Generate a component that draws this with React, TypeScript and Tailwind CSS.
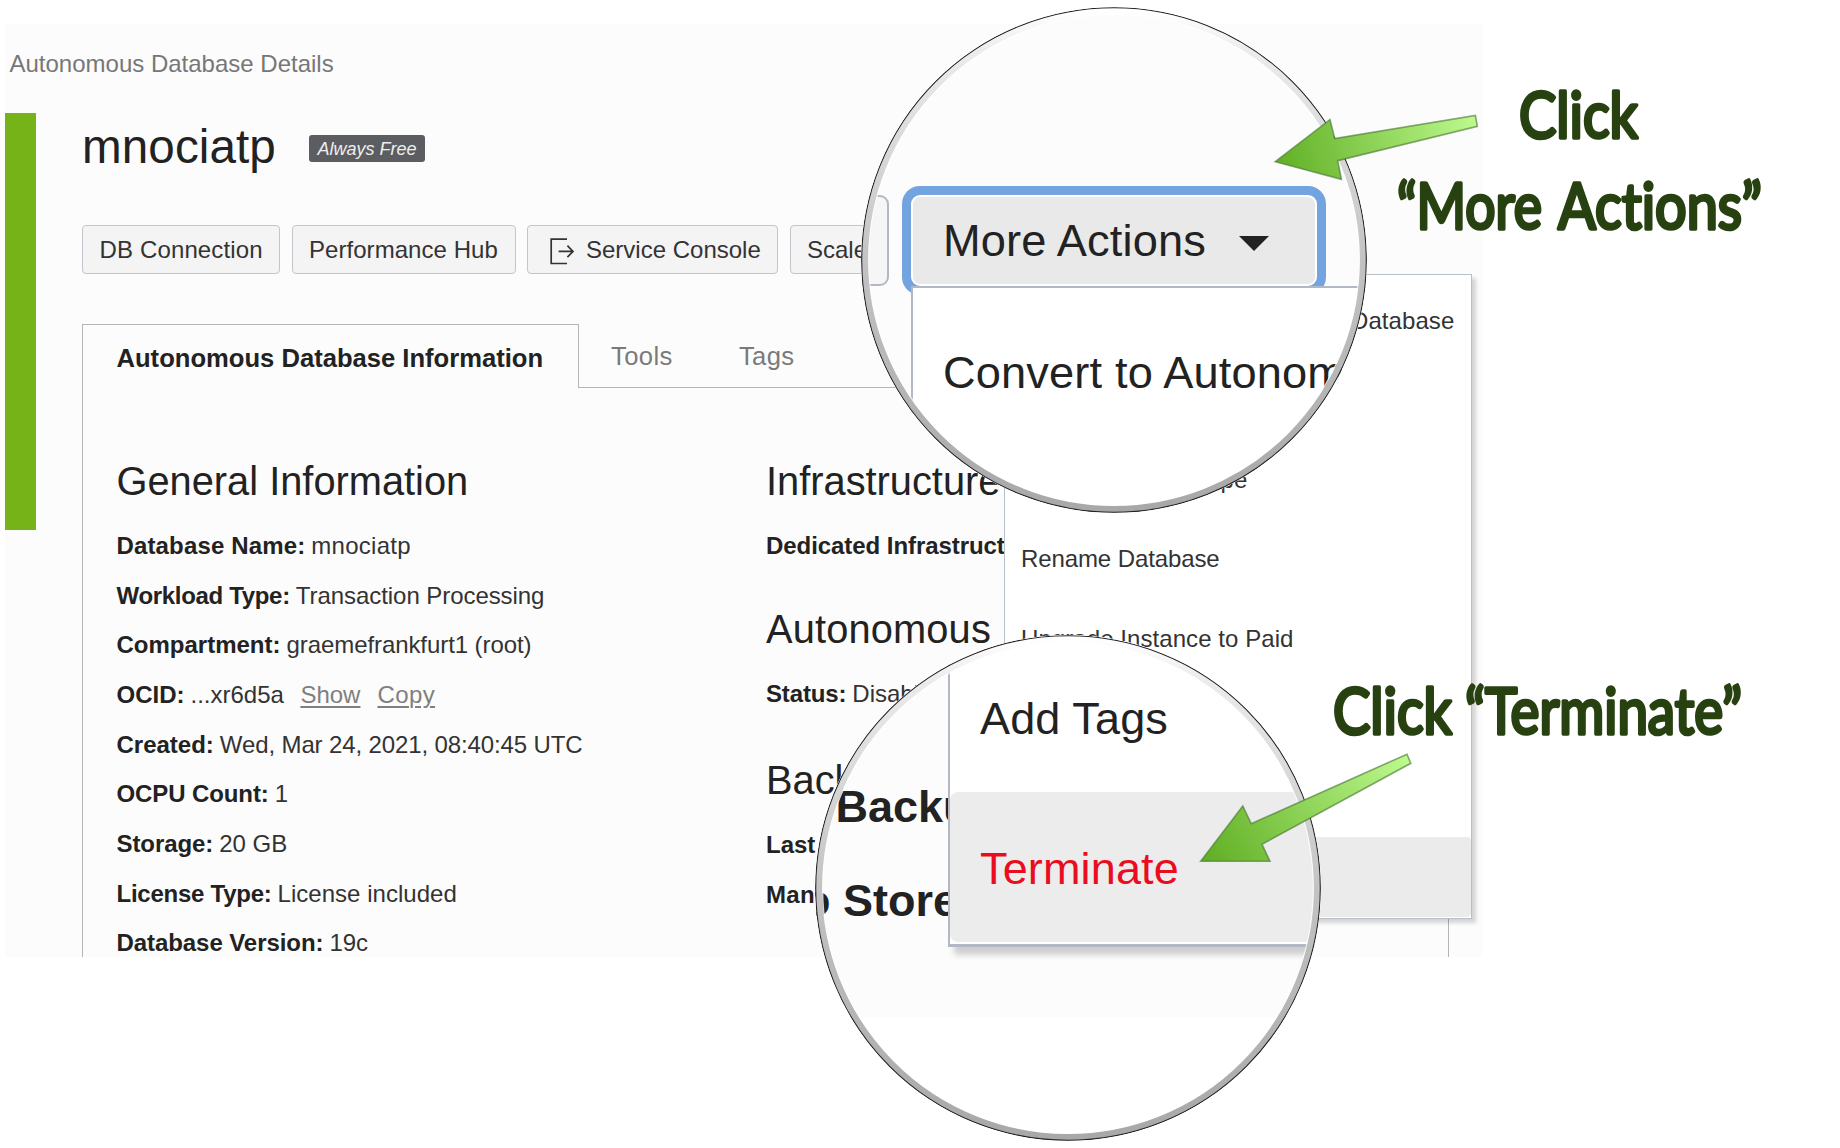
import type { ReactNode } from "react";

const HELV = "font-['Liberation_Sans',Arial,sans-serif]";

/* ---------- toolbar ---------- */

function ConsoleIcon() {
  return (
    <svg width="25" height="27" viewBox="0 0 25 27" fill="none" stroke="#333" strokeWidth="1.7" className="mt-[2px] shrink-0">
      <path d="M17 1.2H1.2v24.3H17" />
      <path d="M8.6 13.4h14.2M17.4 7.6l5.6 5.8-5.6 5.8" />
    </svg>
  );
}

function ToolbarButton({ className, children }: { className: string; children: ReactNode }) {
  return (
    <button
      className={`flex h-[49px] shrink-0 items-center rounded-[4px] border-[1.5px] border-[#c0c6cc] bg-[#f4f4f4] pt-px text-[24px] text-[#333] ${className}`}
    >
      {children}
    </button>
  );
}

/* ---------- details ---------- */

function Heading({ className = "", children }: { className?: string; children: ReactNode }) {
  return <h2 className={`h-[54px] text-[39.8px] leading-[54px] text-[#222] ${className}`}>{children}</h2>;
}

type RowProps = { label: string; labelClass?: string; valueClass?: string; children?: ReactNode };

function Row({ label, labelClass = "", valueClass = "", children }: RowProps) {
  return (
    <div className="flex h-[49.67px] gap-[6px] text-[24px] leading-[49.67px]">
      <span className={`font-bold text-[#222] ${labelClass}`}>{label}</span>
      <span className={`text-[#333] ${valueClass}`}>{children}</span>
    </div>
  );
}

function GeneralInformation() {
  return (
    <section className="w-[649.5px] shrink-0">
      <Heading className="mb-[13.5px]">General Information</Heading>
      <Row label="Database Name:" labelClass="tracking-[0.15px]" valueClass="tracking-[0.25px]">mnociatp</Row>
      <Row label="Workload Type:" labelClass="tracking-[-0.32px]" valueClass="tracking-[-0.06px]">Transaction Processing</Row>
      <Row label="Compartment:" valueClass="tracking-[-0.08px]">graemefrankfurt1 (root)</Row>
      <Row label="OCID:">
        ...xr6d5a
        <a className="ml-[16.5px] text-[#7f7f7f] underline decoration-[1.5px] underline-offset-[3px]">Show</a>
        <a className="ml-[17px] tracking-[0.4px] text-[#7f7f7f] underline decoration-[1.5px] underline-offset-[3px]">Copy</a>
      </Row>
      <Row label="Created:" valueClass="tracking-[-0.12px]">Wed, Mar 24, 2021, 08:40:45 UTC</Row>
      <Row label="OCPU Count:" labelClass="tracking-[-0.1px]">1</Row>
      <Row label="Storage:" labelClass="tracking-[-0.08px]">20 GB</Row>
      <Row label="License Type:" labelClass="tracking-[-0.25px]" valueClass="tracking-[0.03px]">License included</Row>
      <Row label="Database Version:" labelClass="tracking-[-0.07px]">19c</Row>
    </section>
  );
}

function SideInformation() {
  return (
    <section>
      <Heading className="mb-[13.5px]">Infrastructure</Heading>
      <Row label="Dedicated Infrastructure:" labelClass="tracking-[-0.06px]">No</Row>
      <Heading className="mb-[13px] mt-[31.5px] tracking-[0.15px]">Autonomous Data Guard</Heading>
      <Row label="Status:" labelClass="tracking-[-0.15px]">Disabled</Row>
      <Heading className="mb-[13px] mt-[34.5px]">Backup</Heading>
      <Row label="Last Automatic Backup:" />
      <Row label="Manual Backup Store:" labelClass="tracking-[0.3px]" />
    </section>
  );
}

function ConsolePage() {
  return (
    <main className="ml-[5px] h-[932.5px] w-[1477px] overflow-hidden whitespace-nowrap bg-[#fcfcfc] pt-[20px]">
      <div className="h-[69px] pl-[4.5px] text-[24px] leading-[39px] text-[#777]">Autonomous Database Details</div>
      <div className="flex">
        <div className="h-[416.5px] w-[30.5px] shrink-0 bg-[#76b318]" />
        <div className="ml-[46.5px] w-[1367px]">
          <div className="flex h-[68px] items-center">
            <h1 className="w-[227px] text-[47.6px] leading-[70px] tracking-[0.1px] text-[#222]">mnociatp</h1>
            <span className="mt-[3px] flex h-[27px] w-[116px] items-center justify-center rounded-[3px] bg-[#5b5d60] pt-px text-[18px] italic text-[#eee]">
              Always Free
            </span>
          </div>
          <div className="mt-[44px] flex">
            <ToolbarButton className="w-[198px] pl-[16.5px] tracking-[0.14px]">DB Connection</ToolbarButton>
            <ToolbarButton className="ml-[12px] w-[223.5px] pl-[16px] tracking-[0.05px]">Performance Hub</ToolbarButton>
            <ToolbarButton className="ml-[11.5px] w-[251px] pl-[21.5px]">
              <ConsoleIcon />
              <span className="ml-[11.5px]">Service Console</span>
            </ToolbarButton>
            <ToolbarButton className="ml-[11.5px] w-[150px] pl-[16.5px]">Scale Up/Down</ToolbarButton>
          </div>
          <div className="mt-[49.5px] flex h-[64.5px] text-[25.6px]">
            <div className="w-[496.5px] border-x-[1.5px] border-t-[1.5px] border-[#b5b5b5] pl-[33.5px] font-bold leading-[67px] text-[#222]">
              Autonomous Database Information
            </div>
            <div className="flex flex-1 border-b-[1.5px] border-[#b5b5b5] leading-[65px] text-[#7a7a7a]">
              <span className="ml-[32.5px] w-[128px] tracking-[0.4px]">Tools</span>
              <span className="tracking-[0.3px]">Tags</span>
            </div>
          </div>
          <div className="flex h-[700px] border-x-[1.5px] border-[#b5b5b5] pl-[33.5px] pt-[65.5px]">
            <GeneralInformation />
            <SideInformation />
          </div>
        </div>
      </div>
    </main>
  );
}

/* ---------- dropdown ---------- */

const MENU_ITEMS = [
  "Convert to Autonomous JSON Database",
  "Admin Password",
  "Update License Type",
  "Rename Database",
  "Upgrade Instance to Paid",
  "Move Resource",
  "Add Tags",
  "Terminate",
];

function ActionsMenu() {
  return (
    <ul className="absolute left-[1004px] top-[274px] w-[468px] whitespace-nowrap border-[1.5px] border-[#b9bfc7] bg-white pb-px pt-[5.5px] text-[24px] leading-[80.5px] text-[#333] shadow-[4px_4px_4px_rgba(0,0,0,0.16)]">
      {MENU_ITEMS.map((item) => (
        <li
          key={item}
          className={`h-[79.5px] pl-[16px] ${item === "Terminate" ? "rounded-[4px] bg-[#ebebeb] text-[#ea0d20]" : ""} ${
            item === "Rename Database" ? "tracking-[-0.1px]" : "tracking-[0.07px]"
          }`}
        >
          {item}
        </li>
      ))}
    </ul>
  );
}

/* ---------- magnifier lenses ---------- */

function LensRing({ id }: { id: string }) {
  return (
    <svg viewBox="0 0 506 506" className="absolute inset-0 size-full" fill="none">
      <defs>
        <linearGradient id={id} x1="0" y1="0" x2="0" y2="1">
          <stop offset="0" stopColor="#ffffff" />
          <stop offset="0.08" stopColor="#ececec" />
          <stop offset="0.5" stopColor="#c3c3c3" />
          <stop offset="1" stopColor="#a8a8a8" />
        </linearGradient>
      </defs>
      <circle cx="253" cy="253" r="245.5" stroke="#ffffff" strokeOpacity="0.8" strokeWidth="1.5" />
      <circle cx="253" cy="253" r="249.2" stroke={`url(#${id})`} strokeWidth="6.6" />
      <circle cx="253" cy="253" r="252.3" stroke="#222" strokeWidth="1.1" />
    </svg>
  );
}

function MoreActionsLens() {
  return (
    <div className="absolute left-[861px] top-[6.5px] size-[506px] overflow-hidden whitespace-nowrap rounded-full bg-[#fcfcfc] pt-[188.5px] text-[45.2px] tracking-[0.15px] text-[#222]">
      <div className="flex h-[91px]">
        <div className="-ml-[20px] w-[47.5px] rounded-[9px] border-[2.5px] border-[#b3b9c4] bg-[#f6f6f6]" />
        <button className="ml-[22px] flex w-[406px] shrink-0 items-center rounded-[9px] border-[2.5px] border-white bg-[#e9e9e9] pl-[30.5px] pt-px shadow-[0_0_0_9px_#74a4df]">
          More Actions
          <svg width="30" height="15" viewBox="0 0 30 15" className="ml-[32.5px] mt-[4px]">
            <path d="M0 0h30L15 15z" fill="#222" />
          </svg>
        </button>
      </div>
      <div className="relative ml-[50px] h-[240px] w-[500px] border-l-[2.5px] border-t-[2.5px] border-[#b3b9c4] bg-white pl-[30px] pt-[12px]">
        <div className="h-[146px] leading-[146px]">Convert to Autonomous JSON Database</div>
      </div>
      <LensRing id="lens-top" />
    </div>
  );
}

function TerminateLens() {
  return (
    <div className="absolute left-[814.5px] top-[635px] size-[506px] overflow-hidden whitespace-nowrap rounded-full bg-white text-[45px] text-[#222]">
      <div className="h-[382px] bg-[#fcfcfc] pt-[125px] font-bold leading-[93.7px]">
        <div className="pl-[21px]">Backup</div>
        <div className="-ml-[26.5px]">to Store:</div>
      </div>
      <ul className="absolute left-[133.5px] top-0 flex h-[311.5px] w-[500px] flex-col border-b-[3px] border-l-[2.5px] border-[#b3b9c4] bg-white pb-[1.5px] pt-[9px] tracking-[0.15px] shadow-[6px_8px_6px_rgba(0,0,0,0.18)]">
        <li className="h-[148px] pl-[30px] leading-[149px]">Add Tags</li>
        <li className="h-[150px] rounded-[8px] bg-[#ececec] pl-[30px] leading-[153px]  text-[#ea0d20]">Terminate</li>
      </ul>
      <LensRing id="lens-bottom" />
    </div>
  );
}

/* ---------- hand-drawn callouts ---------- */

type CalloutProps = { x: number; y: number; width: number; children: string };

function Callout({ x, y, width, children }: CalloutProps) {
  return (
    <text x={x} y={y} textLength={width} lengthAdjust="spacingAndGlyphs">
      {children}
    </text>
  );
}

function Annotations() {
  return (
    <svg width="1840" height="1148" viewBox="0 0 1840 1148" className="absolute left-0 top-0">
      <defs>
        <linearGradient id="arrow-top" gradientUnits="userSpaceOnUse" x1="1280" y1="170" x2="1475" y2="118">
          <stop offset="0" stopColor="#62b026" />
          <stop offset="1" stopColor="#bdf98e" />
        </linearGradient>
        <linearGradient id="arrow-bottom" gradientUnits="userSpaceOnUse" x1="1215" y1="870" x2="1405" y2="755">
          <stop offset="0" stopColor="#62b026" />
          <stop offset="1" stopColor="#bdf98e" />
        </linearGradient>
      </defs>
      <g stroke="#4c7a34" strokeOpacity="0.65" strokeWidth="1.6">
        <path d="M1275.2 161.7L1330 119.7L1334.7 138.5L1475.4 115.5L1477.3 126.3L1337.7 160.7L1341.4 179.3Z" fill="url(#arrow-top)" />
        <path d="M1200.7 861.3L1242.8 806L1251.2 823.7L1407 754.2L1410.8 763.3L1262 844.3L1270 861.3Z" fill="url(#arrow-bottom)" />
      </g>
      <g
        className="font-['Lato',sans-serif] text-[64px] font-normal [font-variant-ligatures:none]"
        fill="#274111"
        stroke="#274111"
        strokeWidth="3.6"
        strokeLinejoin="round"
        strokeLinecap="round"
      >
        <Callout x={1519} y={138} width={119}>Click</Callout>
        <Callout x={1397} y={228.5} width={145}>“More</Callout>
        <Callout x={1558} y={228.5} width={204}>Actions”</Callout>
        <Callout x={1333} y={733.5} width={119}>Click</Callout>
        <Callout x={1465} y={733.5} width={277}>“Terminate”</Callout>
      </g>
    </svg>
  );
}

export default function App() {
  return (
    <div className={`relative h-[1148px] w-[1840px] overflow-hidden bg-white pt-[24px] ${HELV}`}>
      <ConsolePage />
      <ActionsMenu />
      <MoreActionsLens />
      <TerminateLens />
      <Annotations />
    </div>
  );
}
